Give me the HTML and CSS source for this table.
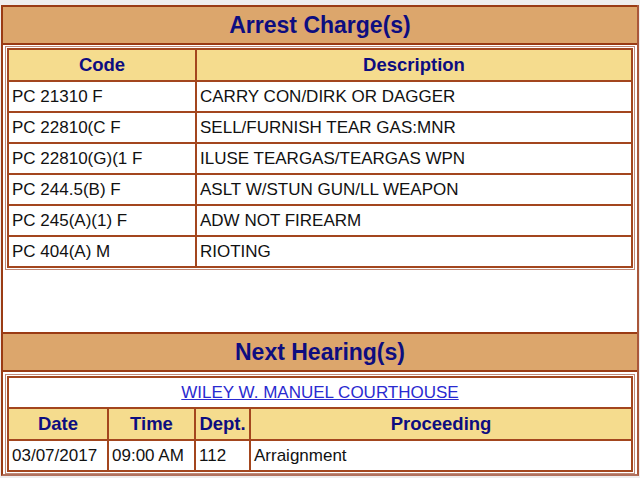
FILE: index.html
```html
<!DOCTYPE html>
<html>
<head>
<meta charset="utf-8">
<link rel="stylesheet" href="styles.css">
</head>
<body>
<div class="page">
  <div class="outer">
    <div class="band">Arrest Charge(s)</div>
    <div class="tblwrap first">
      <table class="grid">
        <colgroup><col class="c-code"><col></colgroup>
        <tr><th>Code</th><th>Description</th></tr>
        <tr><td>PC 21310 F</td><td>CARRY CON/DIRK OR DAGGER</td></tr>
        <tr><td>PC 22810(C F</td><td>SELL/FURNISH TEAR GAS:MNR</td></tr>
        <tr><td>PC 22810(G)(1 F</td><td>ILUSE TEARGAS/TEARGAS WPN</td></tr>
        <tr><td>PC 244.5(B) F</td><td>ASLT W/STUN GUN/LL WEAPON</td></tr>
        <tr><td>PC 245(A)(1) F</td><td>ADW NOT FIREARM</td></tr>
        <tr><td>PC 404(A) M</td><td>RIOTING</td></tr>
      </table>
    </div>
    <div class="spacer"></div>
    <div class="band">Next Hearing(s)</div>
    <div class="tblwrap second">
      <table class="grid">
        <colgroup><col class="c-date"><col class="c-time"><col class="c-dept"><col></colgroup>
        <tr><td colspan="4" class="center"><a href="#">WILEY W. MANUEL COURTHOUSE</a></td></tr>
        <tr><th>Date</th><th>Time</th><th>Dept.</th><th>Proceeding</th></tr>
        <tr><td>03/07/2017</td><td>09:00 AM</td><td>112</td><td>Arraignment</td></tr>
      </table>
    </div>
  </div>
</div>
</body>
</html>
```

FILE: styles.css
```css
html, body {
  margin: 0;
  padding: 0;
}
body {
  background: #efeded;
  font-family: "Liberation Sans", Arial, sans-serif;
}
.page {
  padding-top: 5px;
  padding-left: 1px;
}
.outer {
  width: 634px;
  background: #ffffff;
  border-left: 2px solid #9a3b14;
  border-right: 2px solid #a9573a;
  border-bottom: 2px solid #b0705c;
}
.band {
  height: 36px;
  line-height: 36px;
  background: #dca66c;
  border-top: 2px solid #9a3b14;
  border-bottom: 2px solid #9a3b14;
  text-align: center;
  color: #0d0d80;
  font-weight: bold;
  font-size: 23px;
}
.tblwrap {
  margin: 1px 2px 0 2px;
  border: 1px solid #c08a78;
  padding: 1px;
}
.tblwrap.second {
  margin-top: 2px;
}
.spacer {
  height: 62px;
}
.grid {
  width: 100%;
  border-collapse: collapse;
}
.grid th, .grid td {
  border: 2px solid #a3461e;
  text-align: left;
}
.grid th {
  background: #f5dc8e;
  color: #0d0d80;
  font-weight: bold;
  font-size: 18.5px;
  line-height: 20px;
  padding: 5px 3px;
  text-align: center;
}
.grid td {
  color: #111111;
  font-size: 17px;
  line-height: 19px;
  padding: 5px 3px;
}
.grid td.center {
  text-align: center;
}
.grid a {
  color: #2a2ad0;
  text-decoration: underline;
}
.c-code { width: 188px; }
.c-date { width: 100px; }
.c-time { width: 87px; }
.c-dept { width: 55px; }
```
